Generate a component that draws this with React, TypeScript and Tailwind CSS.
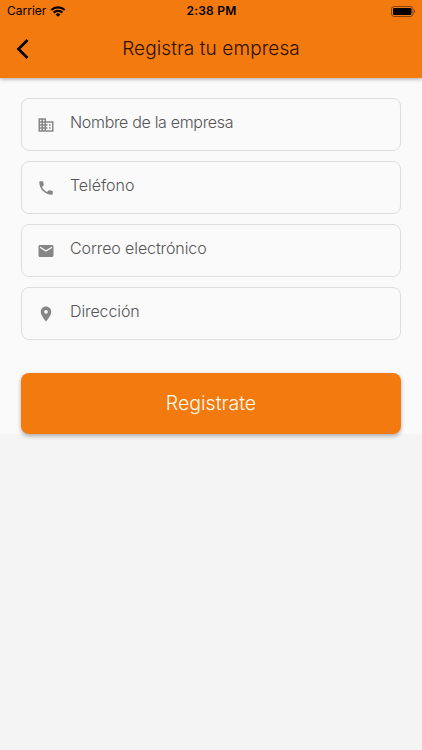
import { MdBusiness, MdEmail, MdLocationOn, MdPhone } from 'react-icons/md';

const fields = [
  { label: 'Nombre de la empresa', icon: MdBusiness, tracking: 'tracking-[-0.32px]' },
  { label: 'Teléfono', icon: MdPhone, tracking: 'tracking-[-0.05px]' },
  { label: 'Correo electrónico', icon: MdEmail, tracking: 'tracking-[-0.1px]' },
  { label: 'Dirección', icon: MdLocationOn, tracking: 'tracking-[-0.1px]' },
];

const StatusBar = () => (
  <div className="grid h-[22px] grid-cols-3 items-center pl-[7px] pr-[6px] text-[12px] leading-[22px] text-black">
    <div className="flex items-center gap-1">
      <span>Carrier</span>
      <svg width="16" height="11" viewBox="0 0 15 11" fill="none" stroke="currentColor" strokeWidth="2.2">
        <path d="M.8 4a9.6 9.6 0 0 1 13.4 0" />
        <path d="M3.2 6.6a6.2 6.2 0 0 1 8.6 0" />
        <path d="M7.5 10.8 5.1 8.4a3.5 3.5 0 0 1 4.8 0Z" fill="currentColor" stroke="none" />
      </svg>
    </div>
    <span className="text-center font-semibold tracking-[0.2px]">2:38 PM</span>
    <div className="flex justify-end">
      <svg width="25" height="11" viewBox="0 0 25 11">
        <rect x=".5" y=".5" width="21.5" height="10" rx="2.7" fill="none" stroke="#000" strokeOpacity=".45" />
        <rect x="2" y="2" width="18.5" height="7" rx="1.3" />
        <path d="M23.2 3.8c1.4.5 1.4 2.9 0 3.4Z" fillOpacity=".5" />
      </svg>
    </div>
  </div>
);

const App = () => {
  return (
    <div className="h-[750px] w-full bg-[#f4f4f4] font-['Inter',sans-serif]">
      <header className="relative h-[78px] bg-[#f27a0e] shadow-[0_1px_4px_rgba(0,0,0,0.35)]">
        <StatusBar />
        <div className="grid h-[54px] grid-cols-[60px_1fr_60px] items-center">
          <button className="pl-4 text-black" aria-label="Volver">
            <svg width="13" height="20" viewBox="0 0 13 20" fill="none" stroke="currentColor" strokeWidth="2.6">
              <path d="M11.5 1 2.5 10l9 9" />
            </svg>
          </button>
          <h1 className="text-center text-[19px] font-light tracking-[0.1px] text-[#2e1000]">Registra tu empresa</h1>
        </div>
      </header>
      <main className="h-[356px] bg-[#fafafa] px-[21px] pt-5">
        <div className="flex flex-col gap-[10.1px]">
          {fields.map(({ label, icon: Icon, tracking }) => (
            <label
              key={label}
              className="flex h-[53px] items-center rounded-lg border border-[#dedede] pl-[15px]"
            >
              <Icon className="size-[18px] text-[#868686]" />
              <span className={`ml-[15px] pb-[5px] text-[16px] font-light text-[#555555] ${tracking}`}>{label}</span>
            </label>
          ))}
        </div>
        <button className="mt-[32.7px] flex h-[61px] w-full items-center justify-center rounded-lg bg-[#f27a0e] pt-px text-[19.5px] font-light text-[#fffaf0] shadow-[0_2px_4px_rgba(0,0,0,0.3)]">
          Registrate
        </button>
      </main>
    </div>
  );
};

export default App;
